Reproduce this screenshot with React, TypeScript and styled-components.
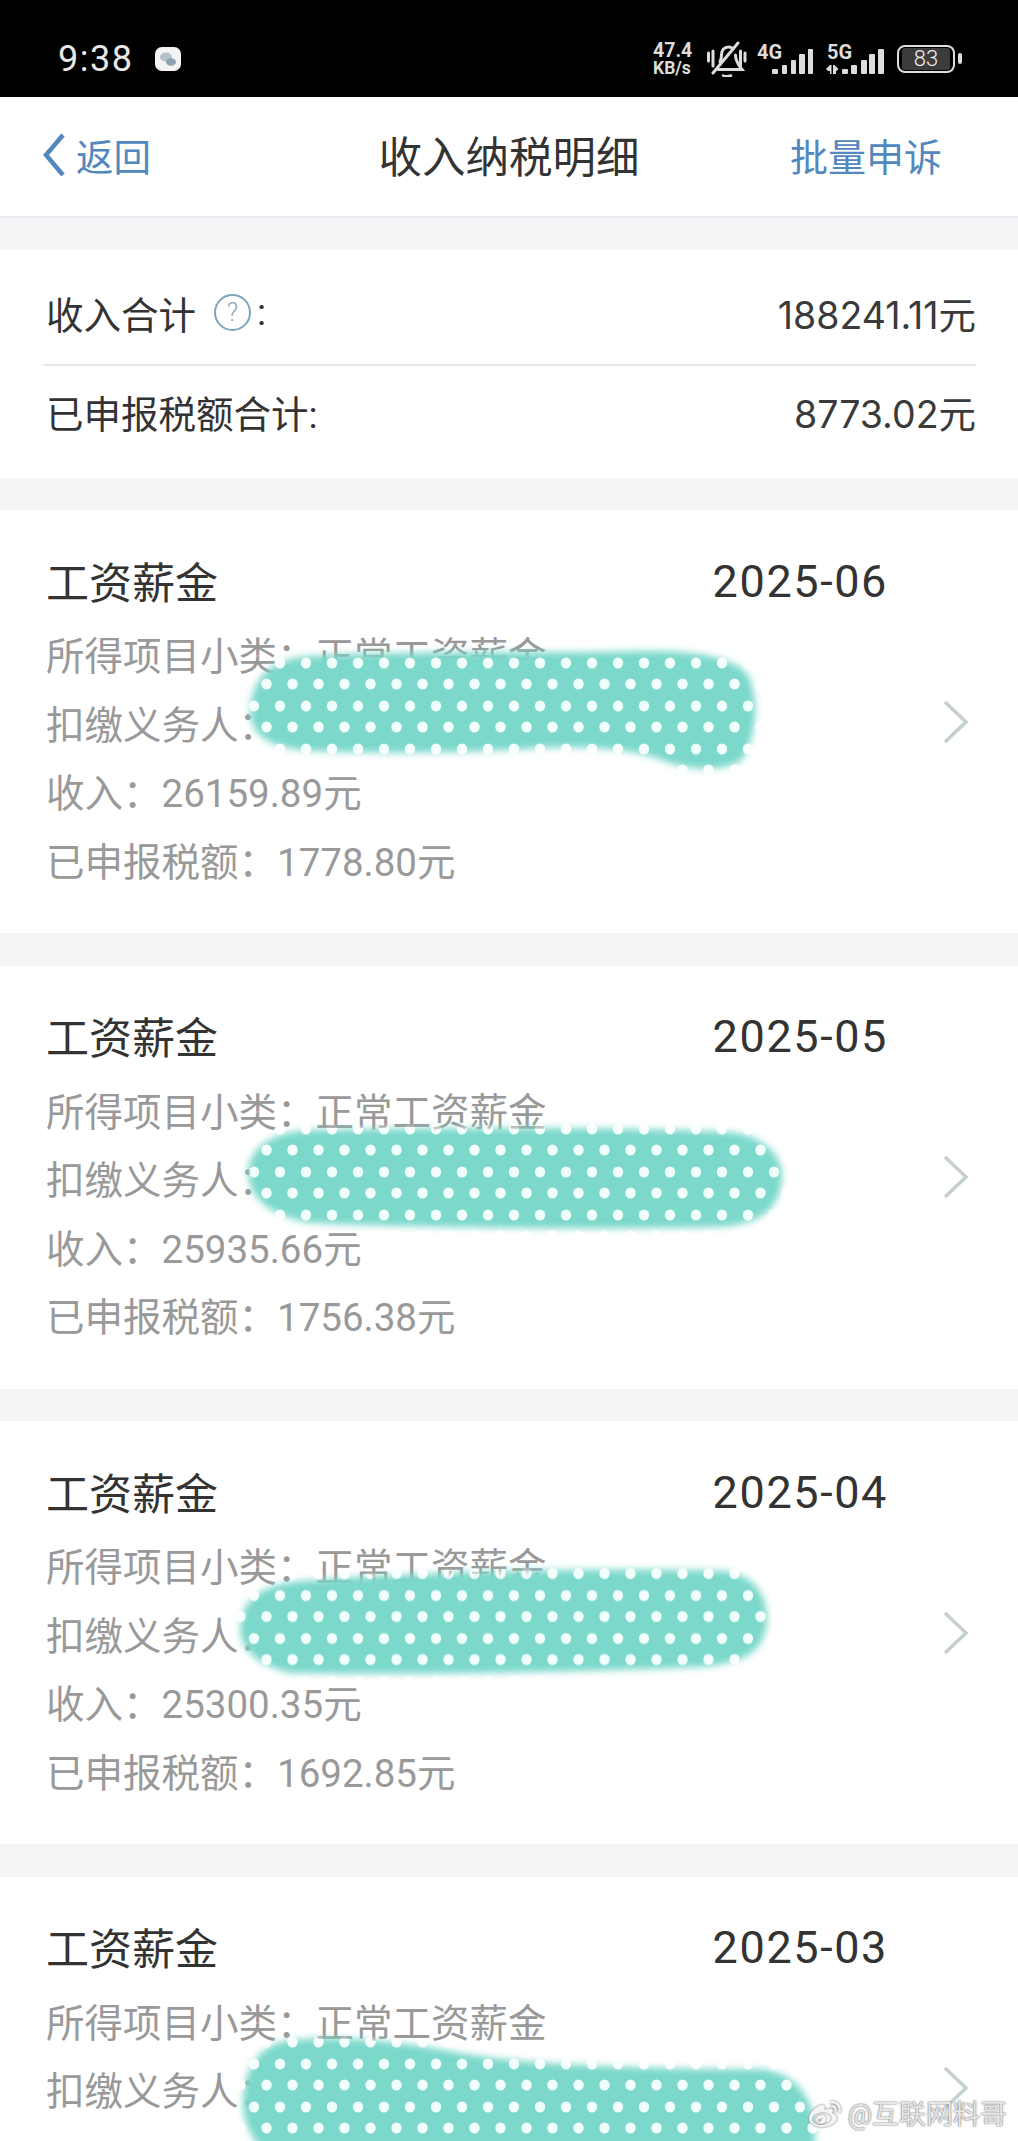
import React from "react";
import styled, { createGlobalStyle } from "styled-components";
import { FaWeibo } from "react-icons/fa";

const FONT = `Roboto, "Noto Sans CJK SC", sans-serif`;

const Global = createGlobalStyle`
  html, body { margin: 0; padding: 0; background: #f4f5f7; }
  * { box-sizing: border-box; }
`;

const Page = styled.div`
  position: relative;
  width: 1018px;
  height: 2141px;
  overflow: hidden;
  background: #f4f5f7;
  font-family: ${FONT};
`;

const StatusBar = styled.div`
  height: 97px;
  background: #000;
  color: #eee;
  display: flex;
  align-items: center;
  padding: 20px 56px 0 58px;
  justify-content: space-between;
`;
const StatusLeft = styled.div`
  display: flex;
  align-items: center;
  gap: 22px;
`;
const Clock = styled.span`
  font-size: 36px;
  line-height: 40px;
  letter-spacing: 1.5px;
  color: #e8e8e8;
`;
const StatusRight = styled.div`
  display: flex;
  align-items: center;
`;
const Speed = styled.div`
  width: 54px;
  padding-left: 1px;
  color: #ddd;
  font-weight: 700;
`;
const SpeedValue = styled.div`
  font-size: 19.5px;
  line-height: 18px;
`;
const SpeedUnit = styled.div`
  font-size: 17.5px;
  line-height: 16px;
`;
const SignalGroup = styled.div<{ $w: number }>`
  position: relative;
  width: ${(p) => p.$w}px;
  height: 32px;
`;
const SignalTag = styled.span<{ $left: number }>`
  position: absolute;
  left: ${(p) => p.$left}px;
  top: 0;
  font-size: 20px;
  line-height: 18px;
  font-weight: 700;
  color: #ddd;
`;
const Battery = styled.div`
  width: 58px;
  height: 28px;
  border: 2.5px solid #ddd;
  border-radius: 8px;
  padding: 1px 3px;
  display: flex;
  margin-left: 12px;
`;
const BatteryFill = styled.div`
  flex: 1;
  background: #3c3c3c;
  border-radius: 3px;
  color: #eee;
  font-size: 22px;
  font-weight: 300;
  line-height: 21px;
  text-align: center;
`;
const BatteryNub = styled.div`
  width: 4px;
  height: 11px;
  background: #ddd;
  border-radius: 2px;
  margin-left: 3px;
`;

const Header = styled.div`
  height: 121px;
  background: #fff;
  border-bottom: 2px solid #e8eaee;
  display: grid;
  grid-template-columns: 1fr auto 1fr;
  align-items: center;
  padding: 0 42px 4px;
`;
const Back = styled.div`
  display: flex;
  align-items: center;
  gap: 10px;
  color: #5288bd;
  font-size: 37.5px;
`;
const Title = styled.div`
  font-size: 43.5px;
  color: #333;
`;
const Action = styled.div`
  justify-self: end;
  margin-right: 34px;
  color: #5288bd;
  font-size: 38px;
`;

const Summary = styled.section`
  margin-top: 32px;
  background: #fff;
  padding: 0 42px 0 44px;
  display: flex;
  flex-direction: column;
`;
const SummaryRow = styled.div<{ $first?: boolean }>`
  height: ${(p) => (p.$first ? "116px" : "112px")};
  display: flex;
  align-items: center;
  justify-content: space-between;
  font-size: 37.5px;
  color: #333;
  padding: ${(p) => (p.$first ? "10px 0 0" : "0 0 22px")};
  border-bottom: ${(p) => (p.$first ? "2px solid #e6e6e6" : "none")};
`;
const SummaryLabel = styled.div`
  display: flex;
  align-items: center;
  padding-left: 2px;
`;
const SummaryValue = styled.span`
  font-family: Inter, "Noto Sans CJK SC", sans-serif;
  font-size: 37.5px;
  color: #3a3a3a;
`;
const HelpMark = styled.span`
  width: 37px;
  height: 37px;
  border: 2px solid #7ba7bd;
  border-radius: 50%;
  margin: 0 6px 0 18px;
  color: #93a7b3;
  font-size: 25px;
  font-weight: 300;
  line-height: 33px;
  text-align: center;
`;

const List = styled.div`
  margin-top: 32px;
  display: flex;
  flex-direction: column;
  gap: 32.5px;
`;
const Card = styled.section`
  position: relative;
  height: 423px;
  flex: none;
  background: #fff;
  display: flex;
  align-items: center;
  padding: 0 49px 0 46px;
`;
const CardBody = styled.div`
  flex: 1;
  height: 100%;
  padding-top: 36px;
  margin-right: 54px;
`;
const CardHead = styled.div`
  height: 72px;
  margin-bottom: 5px;
  display: flex;
  align-items: center;
  justify-content: space-between;
  color: #333;
`;
const CardTitle = styled.div`
  font-size: 43px;
  padding-bottom: 5px;
`;
const CardDate = styled.div`
  font-size: 45px;
  letter-spacing: 1.6px;
  padding-bottom: 2px;
`;
const Line = styled.div`
  height: 68.5px;
  line-height: 68.5px;
  font-size: 38.5px;
  color: #999;
  white-space: nowrap;
`;
const Chevron = styled.svg`
  width: 27px;
  height: 44px;
  flex: none;
`;
const Smear = styled.svg`
  position: absolute;
  left: 0;
  top: 0;
  width: 1018px;
  height: 423px;
  overflow: visible;
  pointer-events: none;
`;
const Watermark = styled.div`
  position: absolute;
  right: 11px;
  bottom: 10px;
  display: flex;
  align-items: center;
  gap: 5px;
  font-size: 27px;
  line-height: 32px;
  color: rgba(246, 246, 246, 0.9);
  text-shadow: 0 0 2px #777, 0 0 1px #777;
`;
const WeiboMark = styled(FaWeibo)`
  width: 36px;
  height: 32px;
  color: #f4f4f4;
  filter: drop-shadow(0 0 1px #666);
`;

const records = [
  {
    date: "2025-06",
    income: "26159.89",
    tax: "1778.80",
    dy: 0,
    blob: "M250,200 C252,170 268,152 300,147 C380,140 540,144 640,141 C690,140 735,146 748,165 C760,190 756,225 744,247 C736,260 700,262 672,254 C640,240 600,236 540,238 C460,244 360,244 300,240 C270,236 250,226 250,200 Z",
  },
  {
    date: "2025-05",
    income: "25935.66",
    tax: "1756.38",
    dy: 10,
    blob: "M248,205 C250,182 270,166 310,164 C420,162 620,160 730,166 C765,170 784,190 782,214 C778,245 760,258 720,261 C600,264 420,262 310,257 C270,250 248,232 248,205 Z",
  },
  {
    date: "2025-04",
    income: "25300.35",
    tax: "1692.85",
    dy: 21.5,
    blob: "M240,205 C242,178 262,164 300,160 C420,150 620,146 725,150 C755,154 768,175 767,200 C764,232 745,242 700,246 C560,252 400,254 290,252 C258,244 240,230 240,205 Z",
  },
  {
    date: "2025-03",
    dy: -9,
    blob: "M243,225 C244,195 256,168 290,163 C340,158 400,164 460,176 C540,190 680,192 760,192 C800,196 816,225 815,262 L815,300 L290,300 C265,280 242,255 243,225 Z",
  },
];

export default function App() {
  return (
    <Page>
      <Global />
      <StatusBar>
        <StatusLeft>
          <Clock>9:38</Clock>
          <svg width="26" height="24" viewBox="0 0 26 24">
            <rect width="26" height="24" rx="7" fill="#f4f4f4" />
            <ellipse cx="11" cy="10" rx="6" ry="4.6" fill="#b4c3cc" />
            <ellipse cx="16" cy="15" rx="5" ry="3.8" fill="#8fa3ae" />
          </svg>
        </StatusLeft>
        <StatusRight>
          <Speed>
            <SpeedValue>47.4</SpeedValue>
            <SpeedUnit>KB/s</SpeedUnit>
          </Speed>
          <svg width="44" height="36" viewBox="0 0 44 36" fill="none" stroke="#ddd" strokeLinecap="round">
            <path d="M2.5 12v8M7 10v15M34.5 10v15M39 12v8" strokeWidth="3" />
            <path d="M14 21c1-2 1.5-4 1.5-7 0-5 3-8 7-8 1.5 0 3 .4 4.5 1.5" strokeWidth="3" />
            <path d="M29.5 14c0 5 2 9 6.5 14.5H12" strokeWidth="3" />
            <path d="M32 2 7 32" strokeWidth="3" />
            <path d="M17 34.5c2 1 5 1 8 0" strokeWidth="2.5" />
          </svg>
          <SignalGroup $w={76}>
            <SignalTag $left={7}>4G</SignalTag>
            <svg width="76" height="32" viewBox="0 0 76 32" fill="#ddd">
              <rect x="22" y="26" width="6" height="5" rx="1" />
              <rect x="32" y="22" width="5" height="9" rx="1" />
              <rect x="41" y="17" width="5" height="14" rx="1" />
              <rect x="49" y="11" width="6" height="20" rx="1" />
              <rect x="58" y="6" width="5" height="25" rx="1" />
            </svg>
          </SignalGroup>
          <SignalGroup $w={59}>
            <SignalTag $left={1}>5G</SignalTag>
            <svg width="59" height="32" viewBox="0 0 59 32" fill="#ddd">
              <path d="M0 26l4-4h1.5v9H4v-3H2zM7 22h1.5l4 4-2 2H10v3H7z" />
              <rect x="16" y="26" width="6" height="5" rx="1" />
              <rect x="25" y="22" width="6" height="9" rx="1" />
              <rect x="35" y="17" width="6" height="14" rx="1" />
              <rect x="43" y="11" width="6" height="20" rx="1" />
              <rect x="52" y="6" width="6" height="25" rx="1" />
            </svg>
          </SignalGroup>
          <Battery>
            <BatteryFill>83</BatteryFill>
          </Battery>
          <BatteryNub />
        </StatusRight>
      </StatusBar>

      <Header>
        <Back>
          <svg width="24" height="44" viewBox="0 0 24 44" fill="none" stroke="#5288bd" strokeWidth="4.5">
            <path d="M21 2 4 22l17 20" />
          </svg>
          <span>返回</span>
        </Back>
        <Title>收入纳税明细</Title>
        <Action>批量申诉</Action>
      </Header>

      <Summary>
        <SummaryRow $first>
          <SummaryLabel>
            收入合计<HelpMark>?</HelpMark>:
          </SummaryLabel>
          <SummaryValue>188241.11元</SummaryValue>
        </SummaryRow>
        <SummaryRow>
          <SummaryLabel>已申报税额合计:</SummaryLabel>
          <SummaryValue>8773.02元</SummaryValue>
        </SummaryRow>
      </Summary>

      <List>
        {records.map((r, i) => (
          <Card key={r.date}>
            <CardBody>
              <CardHead>
                <CardTitle>工资薪金</CardTitle>
                <CardDate>{r.date}</CardDate>
              </CardHead>
              <Line>所得项目小类：正常工资薪金</Line>
              <Line>扣缴义务人：</Line>
              {r.income && <Line>收入：{r.income}元</Line>}
              {r.tax && <Line>已申报税额：{r.tax}元</Line>}
            </CardBody>
            <Chevron viewBox="0 0 27 44" fill="none" stroke="#c6cfcf" strokeWidth="3.5">
              <path d="M3 2l21 20L3 42" />
            </Chevron>
            <Smear viewBox="0 0 1018 423">
              <defs>
                <pattern id={`dots${i}`} patternUnits="userSpaceOnUse" width="26" height="43" y={r.dy}>
                  <rect width="26" height="43" fill="#7bd8cb" />
                  <ellipse cx="20" cy="24" rx="5.2" ry="5.6" fill="#f0fffc" />
                  <ellipse cx="6.5" cy="2" rx="5.2" ry="5.6" fill="#f0fffc" />
                  <ellipse cx="6.5" cy="45" rx="5.2" ry="5.6" fill="#f0fffc" />
                </pattern>
                <filter id={`soft${i}`} x="-5%" y="-15%" width="110%" height="130%">
                  <feGaussianBlur stdDeviation="3.5" />
                </filter>
                <mask id={`shape${i}`} maskUnits="userSpaceOnUse" x="0" y="0" width="1018" height="423">
                  <path d={r.blob} fill="#fff" filter={`url(#soft${i})`} />
                </mask>
              </defs>
              <rect width="1018" height="423" fill={`url(#dots${i})`} mask={`url(#shape${i})`} />
            </Smear>
          </Card>
        ))}
      </List>

      <Watermark>
        <WeiboMark />
        <span>@互联网料哥</span>
      </Watermark>
    </Page>
  );
}
